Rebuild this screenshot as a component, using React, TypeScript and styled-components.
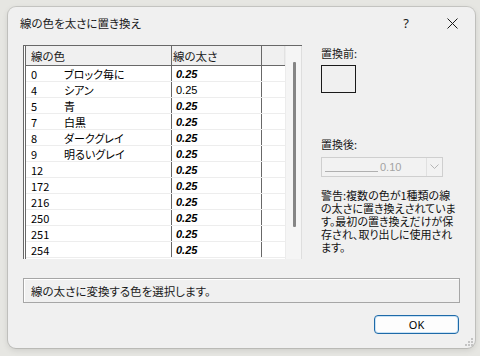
import { createGlobalStyle, styled } from "styled-components";

const GlobalStyle = createGlobalStyle`
    html, body {
        margin: 0;
        padding: 0;
        width: 480px;
        height: 356px;
        overflow: hidden;
        background: #e6e6e2;
    }
    body {
        font-family: "Noto Sans CJK JP", "Noto Sans", sans-serif;
        font-size: 11px;
        color: #000;
        font-feature-settings: "palt";
    }
`;

const Dialog = styled.div`
    position: relative;
    box-sizing: border-box;
    margin: 7px 0 0 8px;
    width: 467px;
    height: 341px;
    background: #f0f0f0;
    border-radius: 8px;
    box-shadow: 0 0 0 1px rgba(0, 0, 0, 0.12), 0 2px 6px rgba(0, 0, 0, 0.12);
    display: flex;
    flex-direction: column;
`;

const TitleBar = styled.div`
    height: 32px;
    display: flex;
    align-items: center;
    padding-left: 12px;
`;

const Title = styled.span`
    flex: 1;
    font-size: 11.5px;
    color: #1a1a1a;
`;

const TitleButton = styled.div`
    width: 46px;
    height: 32px;
    display: flex;
    align-items: center;
    justify-content: center;
    font-family: "Noto Sans", sans-serif;
    font-size: 13px;
    color: #1a1a1a;
`;

const Body = styled.div`
    padding: 6px 15px 0 15px;
    display: flex;
    flex-direction: column;
`;

const MainRow = styled.div`
    display: flex;
    gap: 19px;
`;

const ListBox = styled.div`
    box-sizing: border-box;
    width: 279px;
    height: 214px;
    border-top: 1px solid #686868;
    border-left: 3px double #686868;
    display: flex;
    background: #fff;
`;

const Table = styled.div`
    flex: 1;
    display: flex;
    flex-direction: column;
`;

const HeaderRow = styled.div`
    display: flex;
    height: 19px;
    background: #f0f0f0;
    border-bottom: 1px solid #686868;
`;

const HeaderCell = styled.div<{ $w?: number }>`
    box-sizing: border-box;
    ${(p) => (p.$w ? `width: ${p.$w}px;` : "flex: 1;")}
    border-right: ${(p) => (p.$w ? "1px solid #686868" : "1px solid #e2e2e2")};
    padding-left: ${(p) => (p.$w === 146 ? 5 : 1)}px;
    display: flex;
    align-items: center;
    color: #1a1a1a;
    font-size: 11.5px;
`;

const Row = styled.div`
    display: flex;
    height: 15px;
    border-bottom: 1px solid #ededed;
`;

const Cell = styled.div<{ $w?: number }>`
    box-sizing: border-box;
    ${(p) => (p.$w ? `width: ${p.$w}px;` : "flex: 1;")}
    border-right: ${(p) => (p.$w ? "1px solid #686868" : "none")};
    display: flex;
    align-items: center;
    white-space: nowrap;
`;

const ColorNo = styled.span`
    width: 33px;
    padding-left: 5px;
`;

const Value = styled.span<{ $italic: boolean }>`
    padding-left: 4px;
    font-family: "Liberation Sans", sans-serif;
    font-size: 11px;
    font-style: ${(p) => (p.$italic ? "italic" : "normal")};
    font-weight: ${(p) => (p.$italic ? 600 : 400)};
`;

const ScrollTrack = styled.div`
    box-sizing: border-box;
    width: 17px;
    background: #f5f5f5;
    border-left: 1px solid #ececec;
    border-right: 1px solid #dedede;
    padding-top: 16px;
    display: flex;
    justify-content: center;
`;

const ScrollThumb = styled.div`
    width: 3px;
    height: 165px;
    margin-left: 1px;
    background: #858585;
    border-radius: 1px;
`;

const SidePanel = styled.div`
    flex: 1;
    display: flex;
    flex-direction: column;
    align-items: flex-start;
`;

const Label = styled.div<{ $gap?: number }>`
    line-height: 16px;
    margin-top: ${(p) => p.$gap ?? 0}px;
    color: #1a1a1a;
`;

const Swatch = styled.div`
    box-sizing: border-box;
    width: 35px;
    height: 28px;
    margin-top: 4px;
    border: 1px solid #1a1a1a;
`;

const Select = styled.div`
    box-sizing: border-box;
    width: 122px;
    height: 20px;
    margin-top: 5px;
    border: 1px solid #cfcfcf;
    background: #f2f2f2;
    display: flex;
`;

const SelectValue = styled.div`
    flex: 1;
    display: flex;
    align-items: center;
    padding-left: 3px;
    gap: 2px;
    color: #a3a3a3;
    font-family: "Liberation Sans", sans-serif;
    font-size: 11px;
`;

const WidthLine = styled.span`
    width: 53px;
    height: 1px;
    margin-top: 8px;
    background: #b0b0b0;
`;

const SelectArrow = styled.div`
    width: 15px;
    border-left: 1px solid #e0e0e0;
    display: flex;
    align-items: center;
    justify-content: center;
`;

const Warning = styled.div`
    margin-top: 12px;
    font-size: 11px;
    line-height: 13px;
    color: #111;
    white-space: nowrap;
`;

const StatusBar = styled.div`
    box-sizing: border-box;
    margin-top: 19px;
    height: 25px;
    border: 1px solid #a6a6a6;
    box-shadow: inset 1px 1px 0 #fff;
    padding-left: 7px;
    display: flex;
    align-items: center;
    color: #1a1a1a;
    font-size: 11.5px;
`;

const ButtonRow = styled.div`
    margin-top: 12px;
    display: flex;
    justify-content: flex-end;
    padding-right: 1px;
`;

const OkButton = styled.button`
    box-sizing: border-box;
    width: 85px;
    height: 19px;
    border: 1px solid #1e6aa8;
    box-shadow: inset 0 0 0 1px #c9e2f5;
    border-radius: 4px;
    background: #fdfdfd;
    font-family: "Noto Sans", sans-serif;
    font-size: 11px;
    color: #000;
    padding: 0;
    line-height: 17px;
`;

const Grip = styled.svg`
    position: absolute;
    right: 2px;
    bottom: 2px;
`;

type Entry = { no: string; name: string; italic: boolean };

const entries: Entry[] = [
    { no: "0", name: "ブロック毎に", italic: true },
    { no: "4", name: "シアン", italic: false },
    { no: "5", name: "青", italic: true },
    { no: "7", name: "白黒", italic: true },
    { no: "8", name: "ダークグレイ", italic: true },
    { no: "9", name: "明るいグレイ", italic: true },
    { no: "12", name: "", italic: true },
    { no: "172", name: "", italic: true },
    { no: "216", name: "", italic: true },
    { no: "250", name: "", italic: true },
    { no: "251", name: "", italic: true },
    { no: "254", name: "", italic: true },
];

export default function App() {
    return (
        <>
            <GlobalStyle />
            <Dialog>
                <TitleBar>
                    <Title>線の色を太さに置き換え</Title>
                    <TitleButton>?</TitleButton>
                    <TitleButton>
                        <svg width="11" height="11" viewBox="0 0 11 11">
                            <path d="M0.5 0.5L10.5 10.5M10.5 0.5L0.5 10.5" stroke="#1a1a1a" strokeWidth="1" />
                        </svg>
                    </TitleButton>
                </TitleBar>
                <Body>
                    <MainRow>
                        <ListBox>
                            <Table>
                                <HeaderRow>
                                    <HeaderCell $w={146}>線の色</HeaderCell>
                                    <HeaderCell $w={90}>線の太さ</HeaderCell>
                                    <HeaderCell />
                                </HeaderRow>
                                {entries.map((e) => (
                                    <Row key={e.no}>
                                        <Cell $w={146}>
                                            <ColorNo>{e.no}</ColorNo>
                                            <span>{e.name}</span>
                                        </Cell>
                                        <Cell $w={90}>
                                            <Value $italic={e.italic}>0.25</Value>
                                        </Cell>
                                        <Cell />
                                    </Row>
                                ))}
                            </Table>
                            <ScrollTrack>
                                <ScrollThumb />
                            </ScrollTrack>
                        </ListBox>
                        <SidePanel>
                            <Label>置換前:</Label>
                            <Swatch />
                            <Label $gap={43}>置換後:</Label>
                            <Select>
                                <SelectValue>
                                    <WidthLine />
                                    <span>0.10</span>
                                </SelectValue>
                                <SelectArrow>
                                    <svg width="9" height="6" viewBox="0 0 9 6">
                                        <path d="M0.5 0.5L4.5 4.5L8.5 0.5" stroke="#b5b5b5" fill="none" strokeWidth="1" />
                                    </svg>
                                </SelectArrow>
                            </Select>
                            <Warning>
                                警告:複数の色が1種類の線
                                <br />
                                の太さに置き換えされていま
                                <br />
                                す。最初の置き換えだけが保
                                <br />
                                存され、取り出しに使用され
                                <br />
                                ます。
                            </Warning>
                        </SidePanel>
                    </MainRow>
                    <StatusBar>線の太さに変換する色を選択します。</StatusBar>
                    <ButtonRow>
                        <OkButton>OK</OkButton>
                    </ButtonRow>
                </Body>
                <Grip width="8" height="8" viewBox="0 0 8 8">
                    <rect x="6" y="0" width="2" height="2" fill="#c4c4c4" />
                    <rect x="3" y="3" width="2" height="2" fill="#c4c4c4" />
                    <rect x="6" y="3" width="2" height="2" fill="#c4c4c4" />
                    <rect x="0" y="6" width="2" height="2" fill="#c4c4c4" />
                    <rect x="3" y="6" width="2" height="2" fill="#c4c4c4" />
                    <rect x="6" y="6" width="2" height="2" fill="#c4c4c4" />
                </Grip>
            </Dialog>
        </>
    );
}
